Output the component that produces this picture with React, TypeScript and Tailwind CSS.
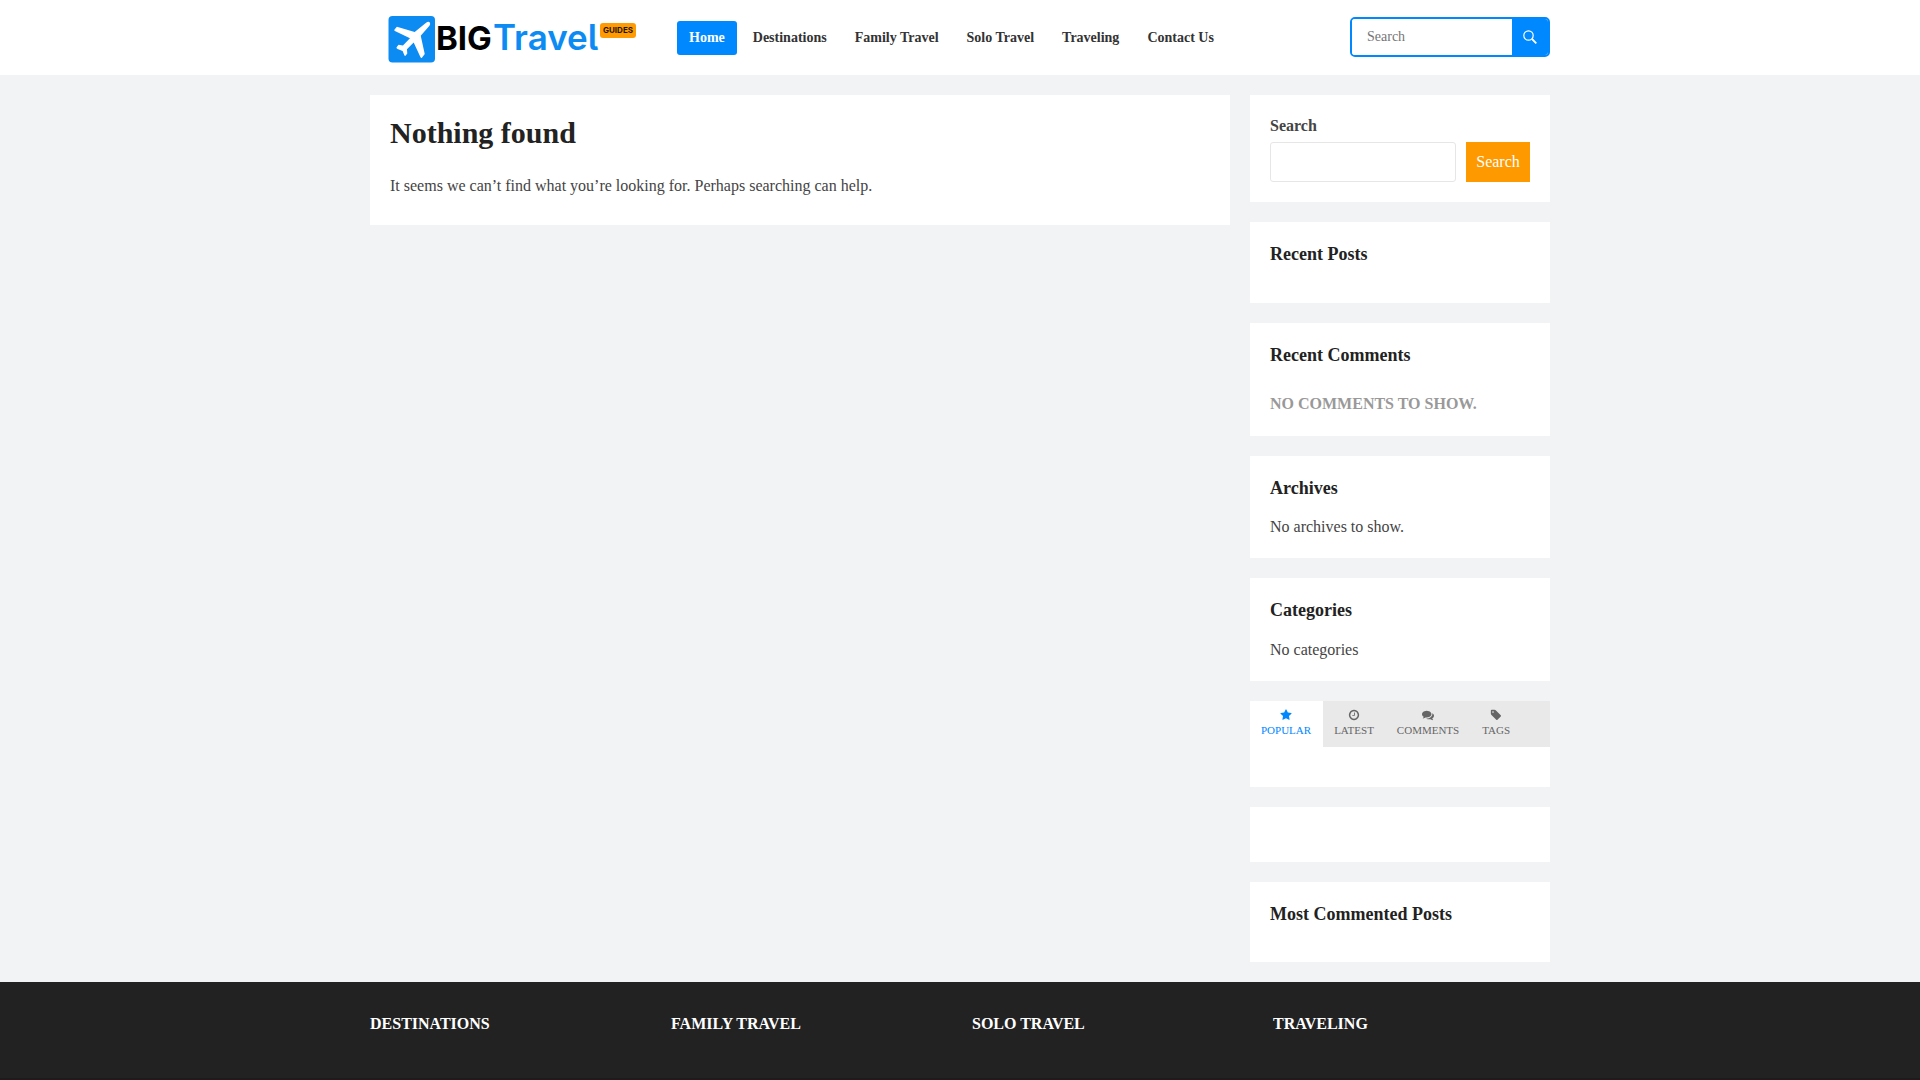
import type { ReactNode } from 'react';

const navItems = ['Home', 'Destinations', 'Family Travel', 'Solo Travel', 'Traveling', 'Contact Us'];
const footerColumns = ['Destinations', 'Family Travel', 'Solo Travel', 'Traveling'];

const tabs = [
  {
    label: 'Popular',
    path: 'M1728 647q0 22-26 48l-363 354 86 500q1 7 1 20 0 21-10.5 35.5t-30.5 14.5q-19 0-40-12l-449-236-449 236q-22 12-40 12-21 0-31.5-14.5t-10.5-35.5q0-6 2-20l86-500-364-354q-25-27-25-48 0-37 56-46l502-73 225-455q19-41 49-41t49 41l225 455 502 73q56 9 56 46z',
  },
  {
    label: 'Latest',
    path: 'M1024 544v448q0 14-9 23t-23 9h-320q-14 0-23-9t-9-23v-64q0-14 9-23t23-9h224v-352q0-14 9-23t23-9h64q14 0 23 9t9 23zm416 352q0-148-73-273t-198-198-273-73-273 73-198 198-73 273 73 273 198 198 273 73 273-73 198-198 73-273zm224 0q0 209-103 385.5t-279.5 279.5-385.5 103-385.5-103-279.5-279.5-103-385.5 103-385.5 279.5-279.5 385.5-103 385.5 103 279.5 279.5 103 385.5z',
  },
  {
    label: 'Comments',
    path: 'M1408 768q0 139-94 257t-256.5 186.5-353.5 68.5q-86 0-176-16-124 88-278 128-36 9-86 16h-3q-11 0-20.5-8t-11.5-21q-1-3-1-6.5t.5-6.5 2-6l2.5-5 3.5-5.5 4-5 4.5-5 4-4.5q5-6 23-25t26-29.5 22.5-29 25-38.5 20.5-44q-124-72-195-177t-71-224q0-139 94-257t256.5-186.5 353.5-68.5 353.5 68.5 256.5 186.5 94 257zm384 256q0 120-71 224.5t-195 176.5q10 24 20.5 44t25 38.5 22.5 29 26 29.5 23 25q1 1 4 4.5t4.5 5 4 5 3.5 5.5l2.5 5 2 6 .5 6.5-1 6.5q-3 14-13 22t-22 7q-50-7-86-16-154-40-278-128-90 16-176 16-271 0-472-132 58 4 88 4 161 0 309-45t264-129q125-92 192-212t67-254q0-77-23-152 129 71 204 178t75 230z',
  },
  {
    label: 'Tags',
    path: 'M576 448q0-53-37.5-90.5t-90.5-37.5-90.5 37.5-37.5 90.5 37.5 90.5 90.5 37.5 90.5-37.5 37.5-90.5zm1067 576q0 53-37 90l-491 492q-39 37-91 37-53 0-90-37l-715-716q-38-37-64.5-101t-26.5-117v-416q0-52 38-90t90-38h416q53 0 117 26.5t102 64.5l715 714q37 39 37 91z',
  },
];

function Logo() {
  return (
    <a href="#" aria-label="BIG Travel Guides" className="mt-[5px] ml-[18px] block shrink-0">
      <svg width="250" height="48" viewBox="0 0 250 48" className="block">
        <rect x="0.5" width="46.5" height="46.5" rx="4" fill="#0c8bf3" />
        <path
          transform="translate(0.5 0) scale(0.3357)"
          d="M25 32 L78 48 L111 21 Q119 15 123 19 Q126 23 122 29 L96 59 L108 113 L99 125 Q97 126 95 122 L75 79 L55 99 L56 112 L50 119 Q48 119 47 116 L42 104 L27 98 Q23 96 24 93 L30 86 L43 88 L64 66 L19 45 Q16 43 18 40 Z"
          fill="#fff"
        />
        <text x="48" y="34" fontSize="33" fontWeight="700" fill="#000" className="font-[Inter]">BIG</text>
        <text x="105" y="34" fontSize="35" fontWeight="600" fill="#0c8bf3" className="font-[Inter] [font-feature-settings:'cv05']">Travel</text>
        <rect x="212" y="7" width="36" height="15" rx="3" fill="#ff9a03" />
        <text x="215" y="17" fontSize="8" fontWeight="700" fill="#221500" className="font-[Inter]">GUIDES</text>
      </svg>
    </a>
  );
}

function Header() {
  return (
    <header className="bg-white">
      <div className="mx-auto flex h-[75px] max-w-[1180px] items-center">
        <Logo />
        <nav className="ml-[39px] flex gap-1 text-sm font-bold">
          {navItems.map((item, i) => (
            <a
              key={item}
              href="#"
              className={
                i === 0
                  ? 'rounded-[3px] bg-[#0088ff] px-3 leading-[34px] text-white'
                  : 'rounded-[3px] px-3 leading-[34px] text-[#333]'
              }
            >
              {item}
            </a>
          ))}
        </nav>
        <form className="mb-px ml-auto flex h-10 w-[200px] overflow-hidden rounded-[5px] border-2 border-[#0088ff]" onSubmit={(e) => e.preventDefault()}>
          <input
            type="search"
            aria-label="Search the site"
            placeholder="Search"
            className="min-w-0 flex-1 bg-white px-[15px] text-sm text-[#333] outline-none placeholder:text-[#757575]"
          />
          <button type="submit" aria-label="Submit search" className="flex w-9 items-center justify-center bg-[#0088ff] text-white">
            <svg width="14" height="14" viewBox="0 0 14 14" fill="none" stroke="currentColor">
              <circle cx="5.5" cy="5.5" r="4.7" strokeWidth="1.2" />
              <path d="M9 9l4.3 4.3" strokeWidth="1.8" />
            </svg>
          </button>
        </form>
      </div>
    </header>
  );
}

function Widget({ title, children }: { title?: string; children?: ReactNode }) {
  return (
    <section className="bg-white p-5">
      {title && <h2 className="text-lg leading-6 font-bold text-[#222]">{title}</h2>}
      {children}
    </section>
  );
}

function TabsWidget() {
  return (
    <section className="bg-white pb-10">
      <div role="tablist" className="flex bg-[#e9e9e9]">
        {tabs.map((tab, i) => (
          <button
            key={tab.label}
            type="button"
            role="tab"
            aria-selected={i === 0}
            className={
              i === 0
                ? 'flex h-[46px] flex-col items-center gap-px bg-white pt-2 pr-3 pl-[11px] text-[11px] leading-4 text-[#0088ff] uppercase'
                : 'flex h-[46px] flex-col items-center gap-px pt-2 pr-3 pl-[11px] text-[11px] leading-4 text-[#666] uppercase'
            }
          >
            <svg width="12" height="12" viewBox="0 0 1792 1792" fill="currentColor">
              <path d={tab.path} />
            </svg>
            {tab.label}
          </button>
        ))}
      </div>
    </section>
  );
}

function Sidebar() {
  return (
    <aside className="flex w-[300px] shrink-0 flex-col gap-5">
      <Widget>
        <form onSubmit={(e) => e.preventDefault()}>
          <label htmlFor="sidebar-search" className="block pb-1.5 leading-[21px] font-bold">
            Search
          </label>
          <div className="flex gap-2.5">
            <input id="sidebar-search" type="search" className="h-10 min-w-0 flex-1 rounded-[3px] border border-[#e6e6e6] bg-white px-3 outline-none" />
            <button type="submit" className="h-10 w-16 bg-[#ff9900] text-white">
              Search
            </button>
          </div>
        </form>
      </Widget>
      <Widget title="Recent Posts">
        <div className="h-[17px]" />
      </Widget>
      <Widget title="Recent Comments">
        <p className="pt-6 leading-[25px] font-bold text-[#999] uppercase">No comments to show.</p>
      </Widget>
      <Widget title="Archives">
        <p className="pt-[15px] leading-[23px]">No archives to show.</p>
      </Widget>
      <Widget title="Categories">
        <p className="pt-4 leading-[23px]">No categories</p>
      </Widget>
      <TabsWidget />
      <Widget>
        <div className="h-[15px]" />
      </Widget>
      <Widget title="Most Commented Posts">
        <div className="h-4" />
      </Widget>
    </aside>
  );
}

export default function App() {
  return (
    <div className="min-h-screen bg-[#f2f3f5] font-['Liberation_Serif',serif] text-base text-[#444]">
      <Header />
      <div className="mx-auto flex max-w-[1180px] items-start gap-5 py-5">
        <main className="flex-1 bg-white px-5 pt-5 pb-[26px]">
          <h1 className="text-3xl leading-9 font-bold text-[#222]">Nothing found</h1>
          <p className="pt-[22px] leading-[26px]">
            It seems we can’t find what you’re looking for. Perhaps searching can help.
          </p>
        </main>
        <Sidebar />
      </div>
      <footer className="border-b-2 border-[#1d1b1b] bg-[#222]">
        <div className="mx-auto grid max-w-[1180px] grid-cols-4 gap-6 pt-[30px] pb-[42px]">
          {footerColumns.map((name) => (
            <h3 key={name} className="leading-6 font-bold text-white uppercase">
              {name}
            </h3>
          ))}
        </div>
      </footer>
    </div>
  );
}
